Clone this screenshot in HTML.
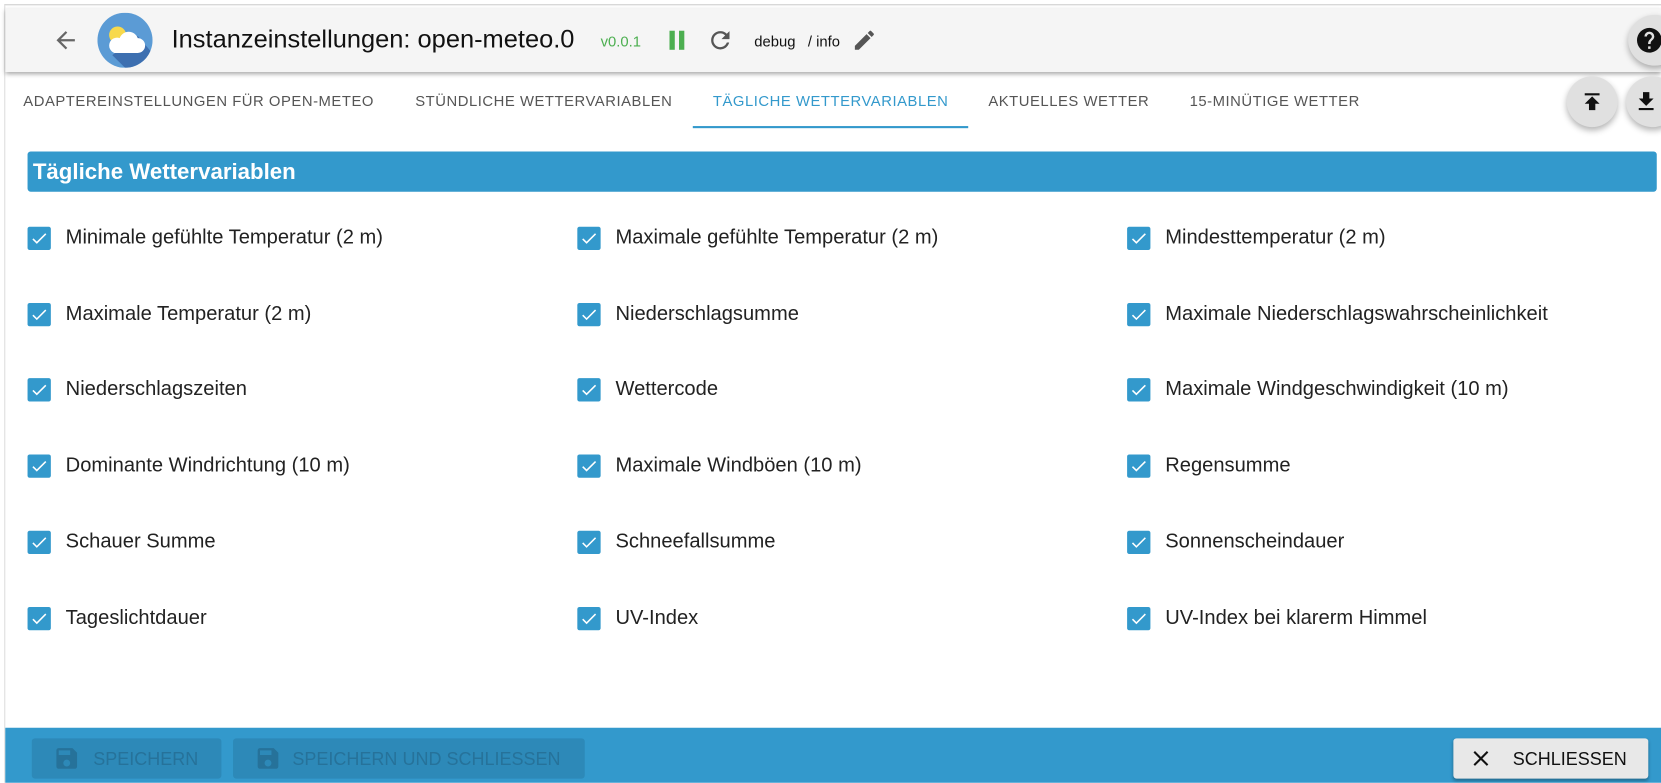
<!DOCTYPE html>
<html><head><meta charset="utf-8"><style>
*{box-sizing:border-box;margin:0;padding:0}
html,body{width:1661px;height:783px;overflow:hidden;background:#fff}
body{font-family:"Liberation Sans",Arial,sans-serif;position:relative}
#w{position:absolute;left:0;top:0;width:1568px;height:739px;transform:scale(1.05931);transform-origin:0 0;overflow:hidden}
.frame{position:absolute;left:4px;top:4px;right:0;bottom:0;border-left:1px solid #ddd;border-top:1px solid #ccc;background:#fff}
.top{position:absolute;left:5px;top:8px;width:1563px;height:60px;background:#f5f5f5;box-shadow:0 2px 4px rgba(0,0,0,.35)}
.title{position:absolute;left:162px;top:24px;font-size:24px;color:#111}
.ver{position:absolute;left:567px;top:31px;font-size:14px;color:#4caf50}
.dbg{position:absolute;left:712px;top:31px;font-size:14px;color:#111}
.tab{position:absolute;top:87px;font-size:14px;color:#555;letter-spacing:.5px}
.fab{position:absolute;width:48px;height:48px;border-radius:50%;background:#e0e0e0;box-shadow:0 3px 6px rgba(0,0,0,.3)}
.hdr{position:absolute;left:26px;top:143px;width:1538px;height:38px;background:#3399cc;border-radius:3px;color:#fff;font-weight:bold;font-size:21px;padding:8px 0 0 5px}
.cb{position:absolute;font-size:19px;color:#222}
.cb i{position:absolute;left:0;top:0;width:22px;height:22px;background:#3399cc;border-radius:2px}
.cb i svg{position:absolute;left:2px;top:2px}
.cb span{position:absolute;left:36px;top:0;white-space:nowrap;line-height:22px}
.foot{position:absolute;left:5px;top:687px;width:1563px;height:52px;background:#3399cc}
.btn{position:absolute;top:697px;height:38px;background:#2d89b8;border-radius:3px;color:#26729a;font-size:17px}
</style></head><body><div id="w">
<div class="frame"></div>
<div class="top">
 <svg style="position:absolute;left:44px;top:17px" width="26" height="26" viewBox="0 0 24 24"><path d="M20 11H7.8l5.6-5.6L12 4l-8 8 8 8 1.4-1.4L7.8 13H20z" fill="#666"/></svg>
 <svg style="position:absolute;left:87px;top:4px" width="52" height="52" viewBox="0 0 52 52"><circle cx="26" cy="26" r="26" fill="#5b9bd5"/><path d="M26 52A26 26 0 0 0 50 36L38 22 14 40z" fill="#3d6fb0"/><circle cx="19" cy="21" r="8" fill="#f7d94c"/><path d="M16 38h22a7 7 0 0 0 0-14 9 9 0 0 0-17 0 7 7 0 0 0-5 14z" fill="#fff"/></svg>
</div>
<div class="title">Instanzeinstellungen: open-meteo.0</div>
<div class="ver">v0.0.1</div>
<div style="position:absolute;left:632px;top:29px;width:5px;height:18px;background:#4caf50"></div>
<div style="position:absolute;left:641px;top:29px;width:5px;height:18px;background:#4caf50"></div>
<svg style="position:absolute;left:667px;top:25px" width="26" height="26" viewBox="0 0 24 24"><path d="M17.65 6.35A7.96 7.96 0 0 0 12 4a8 8 0 1 0 7.73 10h-2.08A6 6 0 1 1 12 6c1.66 0 3.14.69 4.22 1.78L13 11h7V4z" fill="#555"/></svg>
<div class="dbg">debug &nbsp;&nbsp;/ info</div>
<svg style="position:absolute;left:804px;top:26px" width="24" height="24" viewBox="0 0 24 24"><path d="M3 17.25V21h3.75L17.8 9.94l-3.75-3.75zM20.7 7.04a1 1 0 0 0 0-1.41l-2.34-2.34a1 1 0 0 0-1.410 0l-1.83 1.83 3.75 3.75z" fill="#555"/></svg>
<div class="fab" style="left:1537px;top:14px;width:50px;height:48px"></div>
<svg style="position:absolute;left:1543px;top:24px" width="28" height="28" viewBox="0 0 24 24"><path d="M12 2a10 10 0 1 0 0 20 10 10 0 0 0 0-20zm1 17h-2v-2h2zm2.07-7.75-.9.92C13.45 12.9 13 13.5 13 15h-2v-.5c0-1.1.45-2.1 1.17-2.830l1.24-1.26A2 2 0 1 0 10 9H8a4 4 0 1 1 8 0c0 .88-.36 1.68-.93 2.25z" fill="#111"/></svg>
<div class="tab" style="left:22px">ADAPTEREINSTELLUNGEN FÜR OPEN-METEO</div>
<div class="tab" style="left:392px">STÜNDLICHE WETTERVARIABLEN</div>
<div class="tab" style="left:673px;color:#3399cc">TÄGLICHE WETTERVARIABLEN</div>
<div class="tab" style="left:933px">AKTUELLES WETTER</div>
<div class="tab" style="left:1123px">15-MINÜTIGE WETTER</div>
<div style="position:absolute;left:654px;top:119px;width:260px;height:2px;background:#3399cc"></div>
<div class="fab" style="left:1479px;top:72px"></div>
<svg style="position:absolute;left:1491px;top:84px" width="24" height="24" viewBox="0 0 24 24"><path d="M5 4v2h14V4zm0 10h4v6h6v-6h4l-7-7z" fill="#111"/></svg>
<div class="fab" style="left:1535px;top:72px;width:50px"></div>
<svg style="position:absolute;left:1542px;top:84px" width="24" height="24" viewBox="0 0 24 24"><path d="M19 9h-4V3H9v6H5l7 7zM5 18v2h14v-2z" fill="#111"/></svg>
<div class="hdr">Tägliche Wettervariablen</div>

<div class="cb" style="left:26px;top:214px"><i><svg width="18" height="18" viewBox="0 0 24 24"><path d="M9 16.2 4.8 12l-1.4 1.4L9 19 21 7l-1.4-1.4z" fill="#fff"/></svg></i><span>Minimale gefühlte Temperatur (2 m)</span></div>
<div class="cb" style="left:545px;top:214px"><i><svg width="18" height="18" viewBox="0 0 24 24"><path d="M9 16.2 4.8 12l-1.4 1.4L9 19 21 7l-1.4-1.4z" fill="#fff"/></svg></i><span>Maximale gefühlte Temperatur (2 m)</span></div>
<div class="cb" style="left:1064px;top:214px"><i><svg width="18" height="18" viewBox="0 0 24 24"><path d="M9 16.2 4.8 12l-1.4 1.4L9 19 21 7l-1.4-1.4z" fill="#fff"/></svg></i><span>Mindesttemperatur (2 m)</span></div>

<div class="cb" style="left:26px;top:286px"><i><svg width="18" height="18" viewBox="0 0 24 24"><path d="M9 16.2 4.8 12l-1.4 1.4L9 19 21 7l-1.4-1.4z" fill="#fff"/></svg></i><span>Maximale Temperatur (2 m)</span></div>
<div class="cb" style="left:545px;top:286px"><i><svg width="18" height="18" viewBox="0 0 24 24"><path d="M9 16.2 4.8 12l-1.4 1.4L9 19 21 7l-1.4-1.4z" fill="#fff"/></svg></i><span>Niederschlagsumme</span></div>
<div class="cb" style="left:1064px;top:286px"><i><svg width="18" height="18" viewBox="0 0 24 24"><path d="M9 16.2 4.8 12l-1.4 1.4L9 19 21 7l-1.4-1.4z" fill="#fff"/></svg></i><span>Maximale Niederschlagswahrscheinlichkeit</span></div>

<div class="cb" style="left:26px;top:357px"><i><svg width="18" height="18" viewBox="0 0 24 24"><path d="M9 16.2 4.8 12l-1.4 1.4L9 19 21 7l-1.4-1.4z" fill="#fff"/></svg></i><span>Niederschlagszeiten</span></div>
<div class="cb" style="left:545px;top:357px"><i><svg width="18" height="18" viewBox="0 0 24 24"><path d="M9 16.2 4.8 12l-1.4 1.4L9 19 21 7l-1.4-1.4z" fill="#fff"/></svg></i><span>Wettercode</span></div>
<div class="cb" style="left:1064px;top:357px"><i><svg width="18" height="18" viewBox="0 0 24 24"><path d="M9 16.2 4.8 12l-1.4 1.4L9 19 21 7l-1.4-1.4z" fill="#fff"/></svg></i><span>Maximale Windgeschwindigkeit (10 m)</span></div>

<div class="cb" style="left:26px;top:429px"><i><svg width="18" height="18" viewBox="0 0 24 24"><path d="M9 16.2 4.8 12l-1.4 1.4L9 19 21 7l-1.4-1.4z" fill="#fff"/></svg></i><span>Dominante Windrichtung (10 m)</span></div>
<div class="cb" style="left:545px;top:429px"><i><svg width="18" height="18" viewBox="0 0 24 24"><path d="M9 16.2 4.8 12l-1.4 1.4L9 19 21 7l-1.4-1.4z" fill="#fff"/></svg></i><span>Maximale Windböen (10 m)</span></div>
<div class="cb" style="left:1064px;top:429px"><i><svg width="18" height="18" viewBox="0 0 24 24"><path d="M9 16.2 4.8 12l-1.4 1.4L9 19 21 7l-1.4-1.4z" fill="#fff"/></svg></i><span>Regensumme</span></div>

<div class="cb" style="left:26px;top:501px"><i><svg width="18" height="18" viewBox="0 0 24 24"><path d="M9 16.2 4.8 12l-1.4 1.4L9 19 21 7l-1.4-1.4z" fill="#fff"/></svg></i><span>Schauer Summe</span></div>
<div class="cb" style="left:545px;top:501px"><i><svg width="18" height="18" viewBox="0 0 24 24"><path d="M9 16.2 4.8 12l-1.4 1.4L9 19 21 7l-1.4-1.4z" fill="#fff"/></svg></i><span>Schneefallsumme</span></div>
<div class="cb" style="left:1064px;top:501px"><i><svg width="18" height="18" viewBox="0 0 24 24"><path d="M9 16.2 4.8 12l-1.4 1.4L9 19 21 7l-1.4-1.4z" fill="#fff"/></svg></i><span>Sonnenscheindauer</span></div>

<div class="cb" style="left:26px;top:573px"><i><svg width="18" height="18" viewBox="0 0 24 24"><path d="M9 16.2 4.8 12l-1.4 1.4L9 19 21 7l-1.4-1.4z" fill="#fff"/></svg></i><span>Tageslichtdauer</span></div>
<div class="cb" style="left:545px;top:573px"><i><svg width="18" height="18" viewBox="0 0 24 24"><path d="M9 16.2 4.8 12l-1.4 1.4L9 19 21 7l-1.4-1.4z" fill="#fff"/></svg></i><span>UV-Index</span></div>
<div class="cb" style="left:1064px;top:573px"><i><svg width="18" height="18" viewBox="0 0 24 24"><path d="M9 16.2 4.8 12l-1.4 1.4L9 19 21 7l-1.4-1.4z" fill="#fff"/></svg></i><span>UV-Index bei klarerm Himmel</span></div>

<div class="foot"></div>
<div class="btn" style="left:30px;width:179px">
 <svg style="position:absolute;left:20px;top:6px" width="26" height="26" viewBox="0 0 24 24"><path d="M17 3H5a2 2 0 0 0-2 2v14a2 2 0 0 0 2 2h14a2 2 0 0 0 2-2V7zm-5 16a3 3 0 1 1 0-6 3 3 0 0 1 0 6zm3-10H5V5h10z" fill="#26729a"/></svg>
 <span style="position:absolute;left:58px;top:10px">SPEICHERN</span></div>
<div class="btn" style="left:220px;width:332px">
 <svg style="position:absolute;left:20px;top:6px" width="26" height="26" viewBox="0 0 24 24"><path d="M17 3H5a2 2 0 0 0-2 2v14a2 2 0 0 0 2 2h14a2 2 0 0 0 2-2V7zm-5 16a3 3 0 1 1 0-6 3 3 0 0 1 0 6zm3-10H5V5h10z" fill="#26729a"/></svg>
 <span style="position:absolute;left:56px;top:10px">SPEICHERN UND SCHLIESSEN</span></div>
<div style="position:absolute;left:1372px;top:697px;width:184px;height:38px;background:#e8e8e8;border-radius:3px;box-shadow:0 2px 3px rgba(0,0,0,.3);font-size:17px;color:#111">
 <svg style="position:absolute;left:14px;top:7px" width="24" height="24" viewBox="0 0 24 24"><path d="M19 6.4 17.6 5 12 10.6 6.4 5 5 6.4 10.6 12 5 17.6 6.4 19 12 13.4 17.6 19 19 17.6 13.4 12z" fill="#111"/></svg>
 <span style="position:absolute;left:56px;top:10px">SCHLIESSEN</span></div>
</div></body></html>
